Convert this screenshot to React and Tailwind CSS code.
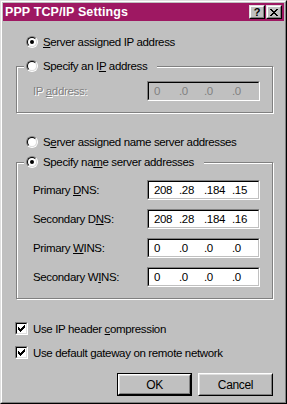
import React from 'react';

function Radio({ checked }) {
  return (
    <div className="w-[12px] h-[12px] shrink-0 rounded-full border border-t-[#808080] border-l-[#808080] border-r-white border-b-white">
      <div className="w-full h-full flex items-center justify-center rounded-full border border-t-black border-l-black border-r-[#dfdfdf] border-b-[#dfdfdf] bg-white">
        {checked && <div className="w-[4px] h-[4px] rounded-full bg-black" />}
      </div>
    </div>
  );
}

function Checkbox() {
  return (
    <div className="w-[13px] h-[13px] shrink-0 border border-t-[#808080] border-l-[#808080] border-r-white border-b-white">
      <div className="w-full h-full flex items-center justify-center border border-t-black border-l-black border-r-[#dfdfdf] border-b-[#dfdfdf] bg-white">
        <svg width="7" height="7" viewBox="0 0 7 7" shapeRendering="crispEdges">
          <rect x="6" y="0" width="1" height="1" fill="black" />
          <rect x="5" y="1" width="2" height="1" fill="black" />
          <rect x="0" y="2" width="1" height="1" fill="black" />
          <rect x="4" y="2" width="3" height="1" fill="black" />
          <rect x="0" y="3" width="2" height="1" fill="black" />
          <rect x="3" y="3" width="3" height="1" fill="black" />
          <rect x="0" y="4" width="5" height="1" fill="black" />
          <rect x="1" y="5" width="3" height="1" fill="black" />
          <rect x="2" y="6" width="1" height="1" fill="black" />
        </svg>
      </div>
    </div>
  );
}

function IpField({ parts, disabled }) {
  return (
    <div className="w-[113px] h-[20px] shrink-0 border border-t-[#808080] border-l-[#808080] border-r-white border-b-white">
      <div
        className={`w-full h-full flex items-center pl-[5px] border border-t-black border-l-black border-r-[#c0c0c0] border-b-[#c0c0c0] ${
          disabled ? 'bg-[#c0c0c0] text-[#808080]' : 'bg-white text-black'
        }`}
      >
        <span className="w-[25px]">{parts[0]}</span>
        <span className="w-[25px]">.{parts[1]}</span>
        <span className="w-[28px]">.{parts[2]}</span>
        <span>.{parts[3]}</span>
      </div>
    </div>
  );
}

function FieldRow({ label, parts, disabled }) {
  return (
    <div className="flex items-center h-[20px]">
      <div className={`w-[114px] ${disabled ? 'text-[#808080] [text-shadow:1px_1px_0_white]' : ''}`}>{label}</div>
      <IpField parts={parts} disabled={disabled} />
    </div>
  );
}

function GroupBox({ legend, className, children }) {
  return (
    <div className={`relative ml-[13px] w-[257px] border border-[#808080] shadow-[inset_1px_1px_0_white,1px_1px_0_white] ${className}`}>
      <div className="absolute top-[-7px] left-[7px] h-[12px] flex items-center gap-[5px] pl-[2px] pr-[10px] bg-[#c0c0c0]">
        {legend}
      </div>
      {children}
    </div>
  );
}

function Button({ children, isDefault }) {
  return (
    <div className={`w-[75px] h-[23px] ${isDefault ? 'border border-black' : ''}`}>
      <div className="w-full h-full border border-t-white border-l-white border-r-black border-b-black">
        <div className="w-full h-full flex items-center justify-center border border-t-[#dfdfdf] border-l-[#dfdfdf] border-r-[#808080] border-b-[#808080] text-[12px]">
          {children}
        </div>
      </div>
    </div>
  );
}

function CaptionButton({ children }) {
  return (
    <div className="w-[16px] h-[14px] bg-[#c0c0c0] border border-t-[#dfdfdf] border-l-[#dfdfdf] border-r-black border-b-black">
      <div className="w-full h-full flex items-center justify-center border border-t-white border-l-white border-r-[#808080] border-b-[#808080]">
        {children}
      </div>
    </div>
  );
}

export default function App() {
  return (
    <div className="w-[287px] h-[404px] bg-[#c0c0c0] border border-t-[#dfdfdf] border-l-[#dfdfdf] border-r-black border-b-black font-['Liberation_Sans',Arial,sans-serif] text-[11.5px] tracking-[-0.35px] text-black leading-[12px] select-none">
      <div className="h-full border border-t-white border-l-white border-r-[#808080] border-b-[#808080] p-px flex flex-col">
        {/* Title bar */}
        <div className="h-[18px] shrink-0 bg-[#9e1862] flex items-center pl-[2px] pr-[2px]">
          <span className="flex-1 text-white font-bold text-[12.5px] tracking-[0.1px]">PPP TCP/IP Settings</span>
          <div className="flex gap-px">
            <CaptionButton>
              <span className="font-bold text-[11px] leading-none tracking-normal">?</span>
            </CaptionButton>
            <CaptionButton>
              <svg width="8" height="7" viewBox="0 0 8 7" shapeRendering="crispEdges">
                <path d="M0 0h2v1h-2zM6 0h2v1h-2zM1 1h2v1h-2zM5 1h2v1h-2zM2 2h4v1h-4zM3 3h2v1h-2zM2 4h4v1h-4zM1 5h2v1h-2zM5 5h2v1h-2zM0 6h2v1h-2zM6 6h2v1h-2z" fill="black" />
              </svg>
            </CaptionButton>
          </div>
        </div>

        {/* Body */}
        <div className="flex-1 flex flex-col">
          <div className="mt-[15px] ml-[23px] h-[12px] flex items-center gap-[5px]">
            <Radio checked />
            <span><u>S</u>erver assigned IP address</span>
          </div>

          <GroupBox
            className="mt-[18px] h-[47px] pt-[14px] pl-[16px]"
            legend={
              <>
                <Radio />
                <span>Specify an I<u>P</u> address</span>
              </>
            }
          >
            <FieldRow label={<>IP <u>a</u>ddress:</>} parts={['0', '0', '0', '0']} disabled />
          </GroupBox>

          <div className="mt-[23px] ml-[23px] h-[12px] flex items-center gap-[5px]">
            <Radio />
            <span>S<u>e</u>rver assigned name server addresses</span>
          </div>

          <GroupBox
            className="mt-[14px] h-[137px] pt-[17px] pl-[16px] flex flex-col gap-[9px]"
            legend={
              <>
                <Radio checked />
                <span>Specify na<u>m</u>e server addresses</span>
              </>
            }
          >
            <FieldRow label={<>Primary <u>D</u>NS:</>} parts={['208', '28', '184', '15']} />
            <FieldRow label={<>Secondary D<u>N</u>S:</>} parts={['208', '28', '184', '16']} />
            <FieldRow label={<>Primary <u>W</u>INS:</>} parts={['0', '0', '0', '0']} />
            <FieldRow label={<>Secondary W<u>I</u>NS:</>} parts={['0', '0', '0', '0']} />
          </GroupBox>

          <div className="mt-[23px] ml-[12px] h-[13px] flex items-center gap-[5px]">
            <Checkbox />
            <span>Use IP header <u>c</u>ompression</span>
          </div>
          <div className="mt-[11px] ml-[12px] h-[13px] flex items-center gap-[5px]">
            <Checkbox />
            <span>Use default gateway on remote network</span>
          </div>

          <div className="mt-[14px] pr-[11px] flex justify-end gap-[6px]">
            <Button isDefault>OK</Button>
            <Button>Cancel</Button>
          </div>
        </div>
      </div>
    </div>
  );
}
